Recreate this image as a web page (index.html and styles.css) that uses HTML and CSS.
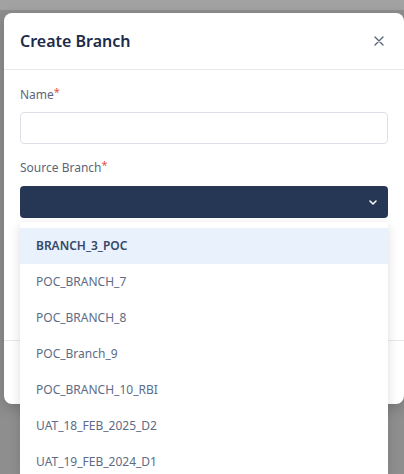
FILE: index.html
```html
<!DOCTYPE html>
<html>
<head>
  <meta charset="UTF-8">
  <title>Create Branch</title>
  <link rel="stylesheet" href="styles.css">
</head>
<body>

  <div class="page-top"></div>

  <div class="modal">
    <div class="modal-header">
      <h2 class="modal-title">Create Branch</h2>
      <button class="close-btn" aria-label="Close">
        <svg width="10" height="10" viewBox="0 0 10 10"><path d="M1 1L9 9M9 1L1 9" stroke="#5b6679" stroke-width="1.4" stroke-linecap="round"/></svg>
      </button>
    </div>

    <div class="modal-body">
      <label class="field-label">Name<span class="req">*</span></label>
      <input class="text-input" type="text">

      <label class="field-label">Source Branch<span class="req">*</span></label>
      <div class="select">
        <svg class="chevron" width="8" height="5" viewBox="0 0 8 5"><path d="M1 1L4 4L7 1" stroke="#fff" stroke-width="1.5" fill="none" stroke-linecap="round" stroke-linejoin="round"/></svg>
      </div>
    </div>

    <div class="modal-footer"></div>
  </div>

  <ul class="dropdown">
    <li class="option active">BRANCH_3_POC</li>
    <li class="option">POC_BRANCH_7</li>
    <li class="option">POC_BRANCH_8</li>
    <li class="option">POC_Branch_9</li>
    <li class="option">POC_BRANCH_10_RBI</li>
    <li class="option">UAT_18_FEB_2025_D2</li>
    <li class="option">UAT_19_FEB_2024_D1</li>
  </ul>

</body>
</html>
```

FILE: styles.css
```css
html, body { margin: 0; padding: 0; height: 100%; overflow: hidden; }
body { background: #8e8e8e; font-family: "Noto Sans", "Open Sans", sans-serif; position: relative; }
.page-top { height: 10px; background: #a2a2a2; }

.modal { position: absolute; left: 4px; top: 13px; width: 400px; height: 391px; background: #fff; border-radius: 8px; box-shadow: 0 4px 14px rgba(0,0,0,0.18); display: flex; flex-direction: column; }
.modal-header { height: 56px; padding: 0 16px; display: flex; align-items: center; justify-content: space-between; border-bottom: 1px solid #e6e8ec; }
.modal-title { margin: 0; font-size: 16px; font-weight: 600; color: #1e2b4a; }
.close-btn { background: none; border: 0; padding: 0; width: 22px; height: 22px; display: flex; align-items: center; justify-content: center; margin-right: -2px; }

.modal-body { flex: 1; padding: 16px 16px 0; display: flex; flex-direction: column; }
.field-label { font-size: 12px; line-height: 18px; color: #5b6679; }
.req { color: #e5533d; font-size: 11px; vertical-align: top; position: relative; top: -3px; }
.text-input { margin: 8px 0 15px; height: 32px; box-sizing: border-box; border: 1px solid #dcdfe5; border-radius: 4px; font: inherit; }
.select { margin-top: 9px; height: 32px; background: #263756; border-radius: 4px; display: flex; align-items: center; justify-content: flex-end; padding-right: 11px; }

.modal-footer { height: 63px; border-top: 1px solid #e6e8ec; }

.dropdown { position: absolute; left: 20px; top: 222px; width: 368px; height: 252px; overflow: hidden; margin: 0; padding: 6px 0 0; box-sizing: border-box; list-style: none; background: #fff; box-shadow: 0 3px 10px rgba(0,0,0,0.14); }
.option { height: 36px; line-height: 36px; padding-left: 16px; font-size: 12px; color: #5c6b86; }
.option.active { background: #e9f1fd; color: #364868; font-weight: 600; }
```
